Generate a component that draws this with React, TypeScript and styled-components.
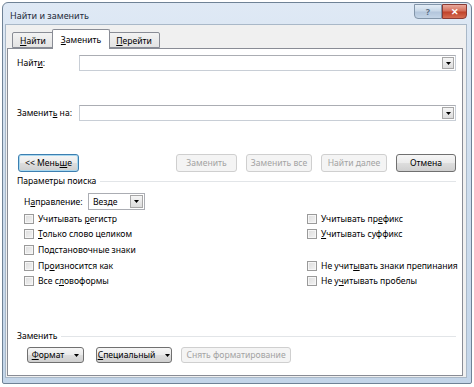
import React from "react";
import styled, { createGlobalStyle } from "styled-components";

const GlobalStyle = createGlobalStyle`
  html, body {
    margin: 0;
    padding: 0;
    background: #ffffff;
  }
  body {
    font-family: "Noto Sans", "Open Sans", sans-serif;
    font-size: 8.6px;
    color: #000;
  }
`;

const Window = styled.div`
  box-sizing: border-box;
  width: 470px;
  height: 382px;
  margin: 2px 0 0 2px;
  border: 1px solid #6f8296;
  border-radius: 6px 6px 2px 2px;
  background: linear-gradient(180deg, #dfe9f5 0%, #cfdeee 40%, #c3d5e9 100%);
  display: flex;
  flex-direction: column;
  padding: 0 4px 5px 2px;
`;

const TitleBar = styled.div`
  height: 21px;
  display: flex;
  align-items: flex-start;
  justify-content: space-between;
`;

const Title = styled.div`
  font-size: 9px;
  padding: 6px 0 0 5px;
  color: #1e2b3a;
`;

const TitleButtons = styled.div`
  display: flex;
  margin-top: 1px;
`;

const CaptionBtn = styled.div<{ close?: boolean }>`
  box-sizing: border-box;
  width: ${(p) => (p.close ? "25px" : "28px")};
  height: 15px;
  border: 1px solid ${(p) => (p.close ? "#8a3a33" : "#8295a9")};
  border-radius: ${(p) => (p.close ? "0 0 4px 0" : "0 0 0 4px")};
  background: ${(p) =>
    p.close
      ? "linear-gradient(180deg, #e9a99c 0%, #d4705c 45%, #c0432b 55%, #d66d52 100%)"
      : "linear-gradient(180deg, #e4edf6 0%, #c9d8e8 45%, #b3c6dc 55%, #c4d5e7 100%)"};
  display: flex;
  align-items: center;
  justify-content: center;
  color: ${(p) => (p.close ? "#fff" : "#5a6e84")};
  font-size: 9px;
  font-weight: bold;
  line-height: 1;
`;

const Client = styled.div`
  flex: 1;
  background: #f0f0f0;
  border: 1px solid #a9b8c8;
  display: flex;
  flex-direction: column;
  padding: 4px 3px 1px 1px;
`;

const TabRow = styled.div`
  display: flex;
  align-items: flex-end;
  padding-left: 5px;
  height: 19px;
  position: relative;
  z-index: 1;
`;

const Tab = styled.div<{ active?: boolean }>`
  box-sizing: border-box;
  height: ${(p) => (p.active ? "20px" : "16px")};
  margin-bottom: ${(p) => (p.active ? "-1px" : "0")};
  padding: ${(p) => (p.active ? "4px 8px 0" : "2px 7px 0")};
  border: 1px solid #898c95;
  border-bottom: ${(p) => (p.active ? "none" : "1px solid #898c95")};
  margin-left: ${(p) => (p.active ? "-2px" : "0")};
  margin-right: ${(p) => (p.active ? "-2px" : "0")};
  background: ${(p) =>
    p.active ? "#ffffff" : "linear-gradient(180deg, #f3f3f3 0%, #e3e3e3 100%)"};
  border-radius: 2px 2px 0 0;
  position: relative;
  z-index: ${(p) => (p.active ? 2 : 1)};
  white-space: nowrap;
`;

const Panel = styled.div`
  flex: 1;
  background: #ffffff;
  border: 1px solid #898c95;
  display: flex;
  flex-direction: column;
  padding: 6px 6px 12px 9px;
`;

const U = styled.span`
  text-decoration: underline;
  text-underline-offset: 1px;
`;

const FieldRow = styled.div<{ gap?: number }>`
  display: flex;
  align-items: center;
  margin-top: ${(p) => p.gap ?? 0}px;
`;

const FieldLabel = styled.div`
  width: 62px;
  flex-shrink: 0;
  white-space: nowrap;
`;

const TextInput = styled.div`
  box-sizing: border-box;
  flex: 1;
  height: 16px;
  border: 1px solid #c8ced6;
  border-top-color: #abadb3;
  background: #fff;
  display: flex;
  justify-content: flex-end;
  align-items: center;
  padding-right: 1px;
`;

const ArrowBox = styled.div`
  box-sizing: border-box;
  width: 12px;
  height: 12px;
  border: 1px solid #a7a7a7;
  background: linear-gradient(180deg, #f6f6f6 0%, #dcdcdc 100%);
  display: flex;
  align-items: center;
  justify-content: center;
`;

const Arrow = () => (
  <svg width="5" height="3" viewBox="0 0 5 3">
    <path d="M0 0h5L2.5 3z" fill="#000" />
  </svg>
);

const ButtonRow = styled.div<{ gap?: number; indent?: number }>`
  display: flex;
  align-items: center;
  gap: 9px;
  margin-top: ${(p) => p.gap ?? 0}px;
  padding-left: ${(p) => p.indent ?? 0}px;
`;

const Spacer = styled.div`
  flex: 1;
`;

const Button = styled.div<{ w: number; h?: number; disabled?: boolean; focus?: boolean }>`
  box-sizing: border-box;
  flex-shrink: 0;
  width: ${(p) => p.w}px;
  height: ${(p) => p.h ?? 18}px;
  border: 1px solid
    ${(p) => (p.disabled ? "#cfcfcf" : p.focus ? "#3c7fb1" : "#707070")};
  border-radius: 3px;
  background: ${(p) =>
    p.disabled
      ? "#f4f4f4"
      : "linear-gradient(180deg, #f6f6f6 0%, #ebebeb 48%, #dddddd 52%, #cfcfcf 100%)"};
  box-shadow: ${(p) => (p.focus ? "inset 0 0 0 1px #a9d8ef" : "none")};
  color: ${(p) => (p.disabled ? "#a3a3a3" : "#000")};
  display: flex;
  align-items: center;
  justify-content: center;
  gap: 10px;
  white-space: nowrap;
`;

const SectionHead = styled.div<{ gap?: number }>`
  display: flex;
  align-items: center;
  gap: 4px;
  margin-top: ${(p) => p.gap ?? 0}px;
  &::after {
    content: "";
    flex: 1;
    height: 1px;
    background: #e2e5e8;
  }
`;

const DirRow = styled.div`
  display: flex;
  align-items: center;
  padding-left: 7px;
  margin-top: 6px;
`;

const DirLabel = styled.div`
  width: 64px;
  white-space: nowrap;
`;

const Combo = styled.div`
  box-sizing: border-box;
  width: 57px;
  height: 17px;
  border: 1px solid #abadb3;
  background: #fff;
  display: flex;
  align-items: center;
  justify-content: space-between;
  padding: 0 1px 0 4px;
`;

const ComboArrow = styled(ArrowBox)`
  width: 13px;
  height: 13px;
`;

const OptionsGrid = styled.div`
  display: grid;
  grid-template-columns: 283px 1fr;
  grid-auto-rows: 15.6px;
  padding-left: 7px;
  margin-top: 1px;
`;

const Option = styled.div`
  display: flex;
  align-items: center;
  gap: 4px;
  white-space: nowrap;
`;

const Box = styled.div`
  box-sizing: border-box;
  flex-shrink: 0;
  width: 10px;
  height: 10px;
  border: 1px solid #9a9a9a;
  background: linear-gradient(135deg, #dcdcdc 0%, #f4f4f4 100%);
  box-shadow: inset 0 0 0 1px #f6f6f6;
`;

const Check = ({ children }: { children: React.ReactNode }) => (
  <Option>
    <Box />
    <span>{children}</span>
  </Option>
);

const Bottom = styled.div`
  margin-top: auto;
`;

export default function App() {
  return (
    <>
      <GlobalStyle />
      <Window>
        <TitleBar>
          <Title>Найти и заменить</Title>
          <TitleButtons>
            <CaptionBtn>?</CaptionBtn>
            <CaptionBtn close>✕</CaptionBtn>
          </TitleButtons>
        </TitleBar>
        <Client>
          <TabRow>
            <Tab>
              <U>Н</U>айти
            </Tab>
            <Tab active>
              <U>З</U>аменить
            </Tab>
            <Tab>
              <U>П</U>ерейти
            </Tab>
          </TabRow>
          <Panel>
            <FieldRow>
              <FieldLabel>
                Найт<U>и</U>:
              </FieldLabel>
              <TextInput>
                <ArrowBox>
                  <Arrow />
                </ArrowBox>
              </TextInput>
            </FieldRow>
            <FieldRow gap={34}>
              <FieldLabel>
                Заменит<U>ь</U> на:
              </FieldLabel>
              <TextInput>
                <ArrowBox>
                  <Arrow />
                </ArrowBox>
              </TextInput>
            </FieldRow>
            <ButtonRow gap={33} indent={1}>
              <Button w={61} focus>
                <span>
                  &lt;&lt; Мень<U>ш</U>е
                </span>
              </Button>
              <Spacer />
              <Button w={61} disabled>
                Заменить
              </Button>
              <Button w={66} disabled>
                Заменить все
              </Button>
              <Button w={66} disabled>
                Найти далее
              </Button>
              <Button w={60}>Отмена</Button>
            </ButtonRow>
            <SectionHead gap={3}>Параметры поиска</SectionHead>
            <DirRow>
              <DirLabel>
                Н<U>а</U>правление:
              </DirLabel>
              <Combo>
                <span>Везде</span>
                <ComboArrow>
                  <Arrow />
                </ComboArrow>
              </Combo>
            </DirRow>
            <OptionsGrid>
              <Check>
                Учитывать <U>р</U>егистр
              </Check>
              <Check>
                Учитывать пр<U>е</U>фикс
              </Check>
              <Check>
                <U>Т</U>олько слово целиком
              </Check>
              <Check>
                <U>У</U>читывать суффикс
              </Check>
              <Check>Подстановочные знаки</Check>
              <div />
              <Check>
                Пр<U>о</U>износится как
              </Check>
              <Check>
                Не учит<U>ы</U>вать знаки препинания
              </Check>
              <Check>
                Все с<U>л</U>овоформы
              </Check>
              <Check>
                Не у<U>ч</U>итывать пробелы
              </Check>
            </OptionsGrid>
            <Bottom>
              <SectionHead>Заменить</SectionHead>
              <ButtonRow gap={5} indent={10}>
                <Button w={57} h={16}>
                  <span>
                    <U>Ф</U>ормат
                  </span>
                  <Arrow />
                </Button>
                <Button w={76} h={16} style={{ marginLeft: 3 }}>
                  <span>
                    <U>С</U>пециальный
                  </span>
                  <Arrow />
                </Button>
                <Button w={110} h={16} disabled>
                  Снять форматирование
                </Button>
              </ButtonRow>
            </Bottom>
          </Panel>
        </Client>
      </Window>
    </>
  );
}
